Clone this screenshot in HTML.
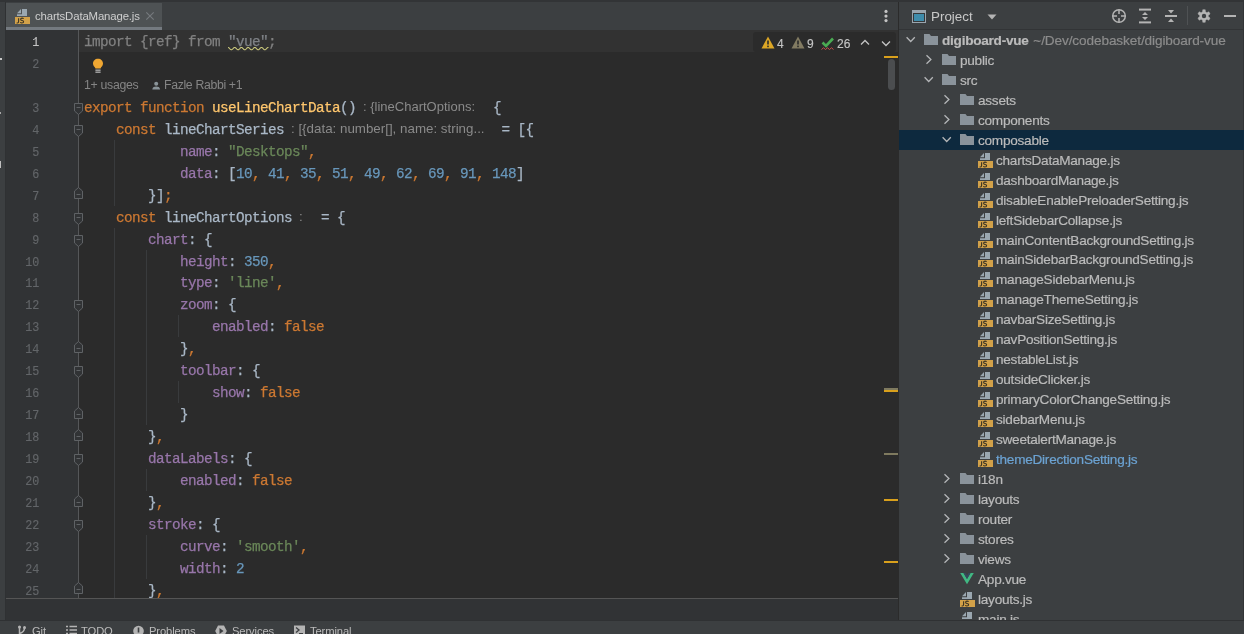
<!DOCTYPE html>
<html><head><meta charset="utf-8"><style>
html,body{margin:0;padding:0;}
body{-webkit-font-smoothing:antialiased;width:1244px;height:634px;overflow:hidden;position:relative;background:#2b2b2b;font-family:"Liberation Sans",sans-serif;}
.abs{position:absolute;}
.ic{position:absolute;line-height:0;}
#topstrip{position:absolute;left:0;top:0;width:1244px;height:2px;background:#323436;}
#leftbar{position:absolute;left:0;top:2px;width:5px;height:618px;background:#3c3f41;}
#leftborder{position:absolute;left:5px;top:2px;width:1px;height:618px;background:#2f3133;}
#tabbar{position:absolute;left:6px;top:2px;width:892px;height:28px;background:#3c3f41;}
#tab{position:absolute;left:6px;top:3px;width:156px;height:24px;background:#4e5254;}
#tabul{position:absolute;left:6px;top:27px;width:156px;height:3px;background:#747a80;}
#tab .name{position:absolute;left:29px;top:7px;font-size:11.4px;letter-spacing:-0.15px;color:#cfcfcf;white-space:nowrap;}
#editor{position:absolute;left:6px;top:30px;width:892px;height:568px;background:#2b2b2b;}
#curline{position:absolute;left:79px;top:30px;width:819px;height:22px;background:#323232;}
#edline{position:absolute;left:6px;top:598px;width:892px;height:1px;background:#555555;}
#hscroll{position:absolute;left:6px;top:599px;width:892px;height:21px;background:#313335;}
#divider{position:absolute;left:898px;top:2px;width:1px;height:618px;background:#2b2b2b;}
#panel{position:absolute;left:899px;top:2px;width:345px;height:618px;background:#3c3f41;}
#pheadb{position:absolute;left:899px;top:29px;width:345px;height:1px;background:#323436;}
#bottombar{position:absolute;left:0;top:621px;width:1244px;height:13px;background:#3c3f41;}
#bottomb{position:absolute;left:0;top:620px;width:1244px;height:1px;background:#2f3133;}
.num{position:absolute;left:6px;width:33px;text-align:right;font-family:"Liberation Mono",monospace;font-size:13px;letter-spacing:-0.2px;line-height:25.5px;color:#636669;transform:scaleX(0.9);transform-origin:right center;-webkit-text-stroke:0.15px currentColor;}
.num.cur{color:#c4c4c4;}
.ln{position:absolute;left:84px;white-space:pre;font-family:"Liberation Mono",monospace;font-size:14.3px;letter-spacing:-0.58px;line-height:24px;color:#a9b7c6;-webkit-text-stroke:0.25px currentColor;}
.guide{position:absolute;width:1px;background:#393b3d;}
.k{color:#cc7832}.fn{color:#ffc66d}.p{color:#9876aa}.s{color:#6a8759}.n{color:#6897bb}.d{color:#a9b7c6}.g{color:#808080}
.gs{color:#7e8186;}
.hint{position:absolute;white-space:nowrap;font-family:"Liberation Sans",sans-serif;font-size:13.4px;line-height:22px;color:#8a8a8a;}
.inlay{position:absolute;white-space:nowrap;font-family:"Liberation Sans",sans-serif;font-size:12.3px;line-height:22px;letter-spacing:-0.3px;color:#858585;}
.tt{position:absolute;white-space:nowrap;font-size:13.6px;letter-spacing:-0.25px;line-height:22px;color:#bbbbbb;-webkit-text-stroke:0.2px currentColor;}
.tt.b{font-weight:bold;}
.tt .path{font-weight:normal;color:#8c8c8c;}
.tt.blue{color:#6ca3d3;}
.selrow{position:absolute;left:899px;width:345px;height:20px;background:#0d293e;}
.bb{position:absolute;top:623px;font-size:11.2px;letter-spacing:-0.1px;line-height:16px;color:#bbbbbb;white-space:nowrap;}
.wn{position:absolute;top:35.5px;font-size:12px;line-height:16px;color:#c4c4c4;-webkit-text-stroke:0.15px currentColor;}
#root{position:absolute;left:0;top:0;width:1244px;height:634px;overflow:hidden;will-change:transform;}
svg{overflow:visible;}

</style></head><body><div id="root">
<div id="topstrip"></div>
<div id="leftbar"></div>
<div id="leftborder"></div>
<div class="abs" style="left:0;top:58px;width:2px;height:2px;background:#c8c8c8"></div>
<div class="abs" style="left:0;top:112px;width:1px;height:2px;background:#a8a8a8"></div>
<div class="abs" style="left:0;top:161px;width:1px;height:7px;background:#c0c0c0"></div>
<div id="tabbar"></div>
<div id="tab">
  <div class="ic" style="left:9px;top:5px"><svg width="16" height="17" viewBox="0 0 16 17"><path d="M2 5.2 L6 1 V5.2 Z" fill="#9aa7b0"/><path d="M7 1 H12 V8 H2 V6.2 H7 Z" fill="#9aa7b0"/><rect x="0" y="9" width="15" height="7" fill="#d2a149"/><path d="M3.6 10.2 V13.6 Q3.6 15 2.4 15 H1.6" fill="none" stroke="#3b3424" stroke-width="1.1"/><path d="M8.6 10.8 Q8.2 10.1 7 10.1 Q5.6 10.1 5.6 11.3 Q5.6 12.3 7 12.5 Q8.6 12.7 8.6 13.8 Q8.6 15 7 15 Q5.7 15 5.3 14.2" fill="none" stroke="#3b3424" stroke-width="1.1"/></svg></div>
  <div class="name">chartsDataManage.js</div>
  <svg style="position:absolute;left:140px;top:9px" width="8" height="8" viewBox="0 0 8 8"><path d="M0.3 0.3 L7.7 7.7 M7.7 0.3 L0.3 7.7" stroke="#767a7e" stroke-width="1.1"/></svg>
</div>
<div id="tabul"></div>
<svg style="position:absolute;left:883px;top:9px" width="6" height="14" viewBox="0 0 6 14"><circle cx="3" cy="2.4" r="1.6" fill="#c4c4c4"/><circle cx="3" cy="7.1" r="1.6" fill="#c4c4c4"/><circle cx="3" cy="11.6" r="1.6" fill="#c4c4c4"/></svg>
<div id="editor"></div>
<div class="abs" style="left:6px;top:30px;width:72px;height:568px;background:#313335"></div>
<div id="curline"></div>
<div class="abs" style="left:78px;top:30px;width:1px;height:568px;background:#555759"></div>
<div class="guide" style="left:114px;top:139.75px;height:65.85px"></div>
<div class="guide" style="left:114px;top:227.54999999999998px;height:370.45000000000005px"></div>
<div class="guide" style="left:146px;top:249.5px;height:175.59999999999997px"></div>
<div class="guide" style="left:178px;top:315.34999999999997px;height:21.94999999999999px"></div>
<div class="guide" style="left:178px;top:381.2px;height:21.94999999999999px"></div>
<div class="guide" style="left:146px;top:469.0px;height:21.94999999999999px"></div>
<div class="guide" style="left:146px;top:534.8499999999999px;height:43.90000000000009px"></div>
<div class="abs" style="left:74px;top:102.85px;height:13px;line-height:0"><svg width="10" height="13" viewBox="0 0 10 13"><path d="M0.5 0.5 H8.5 V8 L4.5 11.5 L0.5 8 Z" fill="#313335" stroke="#5f6265" stroke-width="1"/><path d="M2.5 4.5 H6.5" stroke="#5f6265" stroke-width="1"/></svg></div>
<div class="abs" style="left:74px;top:124.8px;height:13px;line-height:0"><svg width="10" height="13" viewBox="0 0 10 13"><path d="M0.5 0.5 H8.5 V8 L4.5 11.5 L0.5 8 Z" fill="#313335" stroke="#5f6265" stroke-width="1"/><path d="M2.5 4.5 H6.5" stroke="#5f6265" stroke-width="1"/></svg></div>
<div class="abs" style="left:74px;top:212.6px;height:13px;line-height:0"><svg width="10" height="13" viewBox="0 0 10 13"><path d="M0.5 0.5 H8.5 V8 L4.5 11.5 L0.5 8 Z" fill="#313335" stroke="#5f6265" stroke-width="1"/><path d="M2.5 4.5 H6.5" stroke="#5f6265" stroke-width="1"/></svg></div>
<div class="abs" style="left:74px;top:234.54999999999998px;height:13px;line-height:0"><svg width="10" height="13" viewBox="0 0 10 13"><path d="M0.5 0.5 H8.5 V8 L4.5 11.5 L0.5 8 Z" fill="#313335" stroke="#5f6265" stroke-width="1"/><path d="M2.5 4.5 H6.5" stroke="#5f6265" stroke-width="1"/></svg></div>
<div class="abs" style="left:74px;top:300.4px;height:13px;line-height:0"><svg width="10" height="13" viewBox="0 0 10 13"><path d="M0.5 0.5 H8.5 V8 L4.5 11.5 L0.5 8 Z" fill="#313335" stroke="#5f6265" stroke-width="1"/><path d="M2.5 4.5 H6.5" stroke="#5f6265" stroke-width="1"/></svg></div>
<div class="abs" style="left:74px;top:366.25px;height:13px;line-height:0"><svg width="10" height="13" viewBox="0 0 10 13"><path d="M0.5 0.5 H8.5 V8 L4.5 11.5 L0.5 8 Z" fill="#313335" stroke="#5f6265" stroke-width="1"/><path d="M2.5 4.5 H6.5" stroke="#5f6265" stroke-width="1"/></svg></div>
<div class="abs" style="left:74px;top:454.05px;height:13px;line-height:0"><svg width="10" height="13" viewBox="0 0 10 13"><path d="M0.5 0.5 H8.5 V8 L4.5 11.5 L0.5 8 Z" fill="#313335" stroke="#5f6265" stroke-width="1"/><path d="M2.5 4.5 H6.5" stroke="#5f6265" stroke-width="1"/></svg></div>
<div class="abs" style="left:74px;top:519.9px;height:13px;line-height:0"><svg width="10" height="13" viewBox="0 0 10 13"><path d="M0.5 0.5 H8.5 V8 L4.5 11.5 L0.5 8 Z" fill="#313335" stroke="#5f6265" stroke-width="1"/><path d="M2.5 4.5 H6.5" stroke="#5f6265" stroke-width="1"/></svg></div>
<div class="abs" style="left:74px;top:187.25px;height:13px;line-height:0"><svg width="10" height="13" viewBox="0 0 10 13"><path d="M0.5 11.5 H8.5 V4 L4.5 0.5 L0.5 4 Z" fill="#313335" stroke="#5f6265" stroke-width="1"/><path d="M2.5 7.5 H6.5" stroke="#5f6265" stroke-width="1"/></svg></div>
<div class="abs" style="left:74px;top:340.90000000000003px;height:13px;line-height:0"><svg width="10" height="13" viewBox="0 0 10 13"><path d="M0.5 11.5 H8.5 V4 L4.5 0.5 L0.5 4 Z" fill="#313335" stroke="#5f6265" stroke-width="1"/><path d="M2.5 7.5 H6.5" stroke="#5f6265" stroke-width="1"/></svg></div>
<div class="abs" style="left:74px;top:406.75px;height:13px;line-height:0"><svg width="10" height="13" viewBox="0 0 10 13"><path d="M0.5 11.5 H8.5 V4 L4.5 0.5 L0.5 4 Z" fill="#313335" stroke="#5f6265" stroke-width="1"/><path d="M2.5 7.5 H6.5" stroke="#5f6265" stroke-width="1"/></svg></div>
<div class="abs" style="left:74px;top:428.7px;height:13px;line-height:0"><svg width="10" height="13" viewBox="0 0 10 13"><path d="M0.5 11.5 H8.5 V4 L4.5 0.5 L0.5 4 Z" fill="#313335" stroke="#5f6265" stroke-width="1"/><path d="M2.5 7.5 H6.5" stroke="#5f6265" stroke-width="1"/></svg></div>
<div class="abs" style="left:74px;top:494.55px;height:13px;line-height:0"><svg width="10" height="13" viewBox="0 0 10 13"><path d="M0.5 11.5 H8.5 V4 L4.5 0.5 L0.5 4 Z" fill="#313335" stroke="#5f6265" stroke-width="1"/><path d="M2.5 7.5 H6.5" stroke="#5f6265" stroke-width="1"/></svg></div>
<div class="abs" style="left:74px;top:582.35px;height:13px;line-height:0"><svg width="10" height="13" viewBox="0 0 10 13"><path d="M0.5 11.5 H8.5 V4 L4.5 0.5 L0.5 4 Z" fill="#313335" stroke="#5f6265" stroke-width="1"/><path d="M2.5 7.5 H6.5" stroke="#5f6265" stroke-width="1"/></svg></div>
<div class="ln" style="top:30.0px"><span class="g">import {ref} from </span><span class="gs">&quot;vue&quot;</span><span class="g">;</span></div>
<div class="num cur" style="top:30.0px">1</div>
<div class="ln" style="top:51.95px"></div>
<div class="num" style="top:51.95px">2</div>
<div class="ln" style="top:95.85px"><span class="k">export</span><span class="d"> </span><span class="k">function</span><span class="d"> </span><span class="fn">useLineChartData</span><span class="d">()</span></div>
<div class="num" style="top:95.85px">3</div>
<div class="ln" style="top:117.8px"><span class="d">    </span><span class="k">const</span><span class="d"> lineChartSeries</span></div>
<div class="num" style="top:117.8px">4</div>
<div class="ln" style="top:139.75px"><span class="d">            </span><span class="p">name</span><span class="d">: </span><span class="s">&quot;Desktops&quot;</span><span class="k">,</span></div>
<div class="num" style="top:139.75px">5</div>
<div class="ln" style="top:161.7px"><span class="d">            </span><span class="p">data</span><span class="d">: [</span><span class="n">10</span><span class="k">, </span><span class="n">41</span><span class="k">, </span><span class="n">35</span><span class="k">, </span><span class="n">51</span><span class="k">, </span><span class="n">49</span><span class="k">, </span><span class="n">62</span><span class="k">, </span><span class="n">69</span><span class="k">, </span><span class="n">91</span><span class="k">, </span><span class="n">148</span><span class="d">]</span></div>
<div class="num" style="top:161.7px">6</div>
<div class="ln" style="top:183.65px"><span class="d">        }]</span><span class="k">;</span></div>
<div class="num" style="top:183.65px">7</div>
<div class="ln" style="top:205.6px"><span class="d">    </span><span class="k">const</span><span class="d"> lineChartOptions</span></div>
<div class="num" style="top:205.6px">8</div>
<div class="ln" style="top:227.54999999999998px"><span class="d">        </span><span class="p">chart</span><span class="d">: {</span></div>
<div class="num" style="top:227.54999999999998px">9</div>
<div class="ln" style="top:249.5px"><span class="d">            </span><span class="p">height</span><span class="d">: </span><span class="n">350</span><span class="k">,</span></div>
<div class="num" style="top:249.5px">10</div>
<div class="ln" style="top:271.45px"><span class="d">            </span><span class="p">type</span><span class="d">: </span><span class="s">&#x27;line&#x27;</span><span class="k">,</span></div>
<div class="num" style="top:271.45px">11</div>
<div class="ln" style="top:293.4px"><span class="d">            </span><span class="p">zoom</span><span class="d">: {</span></div>
<div class="num" style="top:293.4px">12</div>
<div class="ln" style="top:315.34999999999997px"><span class="d">                </span><span class="p">enabled</span><span class="d">: </span><span class="k">false</span></div>
<div class="num" style="top:315.34999999999997px">13</div>
<div class="ln" style="top:337.3px"><span class="d">            }</span><span class="k">,</span></div>
<div class="num" style="top:337.3px">14</div>
<div class="ln" style="top:359.25px"><span class="d">            </span><span class="p">toolbar</span><span class="d">: {</span></div>
<div class="num" style="top:359.25px">15</div>
<div class="ln" style="top:381.2px"><span class="d">                </span><span class="p">show</span><span class="d">: </span><span class="k">false</span></div>
<div class="num" style="top:381.2px">16</div>
<div class="ln" style="top:403.15px"><span class="d">            }</span></div>
<div class="num" style="top:403.15px">17</div>
<div class="ln" style="top:425.09999999999997px"><span class="d">        }</span><span class="k">,</span></div>
<div class="num" style="top:425.09999999999997px">18</div>
<div class="ln" style="top:447.05px"><span class="d">        </span><span class="p">dataLabels</span><span class="d">: {</span></div>
<div class="num" style="top:447.05px">19</div>
<div class="ln" style="top:469.0px"><span class="d">            </span><span class="p">enabled</span><span class="d">: </span><span class="k">false</span></div>
<div class="num" style="top:469.0px">20</div>
<div class="ln" style="top:490.95px"><span class="d">        }</span><span class="k">,</span></div>
<div class="num" style="top:490.95px">21</div>
<div class="ln" style="top:512.9px"><span class="d">        </span><span class="p">stroke</span><span class="d">: {</span></div>
<div class="num" style="top:512.9px">22</div>
<div class="ln" style="top:534.8499999999999px"><span class="d">            </span><span class="p">curve</span><span class="d">: </span><span class="s">&#x27;smooth&#x27;</span><span class="k">,</span></div>
<div class="num" style="top:534.8499999999999px">23</div>
<div class="ln" style="top:556.8px"><span class="d">            </span><span class="p">width</span><span class="d">: </span><span class="n">2</span></div>
<div class="num" style="top:556.8px">24</div>
<div class="ln" style="top:578.75px"><span class="d">        }</span><span class="k">,</span></div>
<div class="num" style="top:578.75px">25</div>
<div class="hint" style="left:363px;top:95.85px;font-size:13px">: {lineChartOptions:</div>
<div class="ln" style="left:493px;top:95.85px"><span class="d">{</span></div>
<div class="hint" style="left:291px;top:117.8px;font-size:13.35px">: [{data: number[], name: string...</div>
<div class="ln" style="left:501.5px;top:117.8px"><span class="d">= [{</span></div>
<div class="hint" style="left:299px;top:205.6px">:</div>
<div class="ln" style="left:321px;top:205.6px"><span class="d">= {</span></div>
<div class="inlay" style="left:84px;top:74px">1+ usages</div>
<svg class="abs" style="left:152px;top:81px" width="9" height="9" viewBox="0 0 9 9"><circle cx="4.2" cy="2.8" r="2" fill="#8a9499"/><path d="M0.3 8.4 C0.6 6.2 2.2 5.6 4.2 5.6 C6.2 5.6 7.8 6.2 8.1 8.4 Z" fill="#8a9499"/></svg>
<div class="inlay" style="left:164px;top:74px;letter-spacing:-0.35px">Fazle Rabbi +1</div>
<svg class="abs" style="left:92px;top:58px" width="12" height="16" viewBox="0 0 12 16"><path d="M6 0.8 C8.9 0.8 11 2.9 11 5.6 C11 7.6 9.7 8.6 9 9.6 L8.6 10.6 H3.4 L3 9.6 C2.3 8.6 1 7.6 1 5.6 C1 2.9 3.1 0.8 6 0.8 Z" fill="#f0a732"/><rect x="3.4" y="11.6" width="5.2" height="1.1" fill="#c9c9c9"/><rect x="3.4" y="13.6" width="5.2" height="1.1" fill="#c9c9c9"/></svg>
<svg class="abs" style="left:228px;top:46.6px" width="41" height="4" viewBox="0 0 41 4"><path d="M0.00 0.45 L0.20 0.47 L0.41 0.53 L0.61 0.63 L0.81 0.77 L1.01 0.93 L1.22 1.12 L1.42 1.32 L1.62 1.54 L1.82 1.76 L2.02 1.97 L2.23 2.17 L2.43 2.35 L2.63 2.50 L2.83 2.62 L3.04 2.70 L3.24 2.74 L3.44 2.75 L3.65 2.71 L3.85 2.63 L4.05 2.51 L4.25 2.36 L4.46 2.19 L4.66 1.99 L4.86 1.78 L5.06 1.56 L5.26 1.34 L5.47 1.14 L5.67 0.95 L5.87 0.78 L6.08 0.64 L6.28 0.54 L6.48 0.47 L6.68 0.45 L6.88 0.47 L7.09 0.53 L7.29 0.62 L7.49 0.75 L7.70 0.92 L7.90 1.10 L8.10 1.31 L8.30 1.52 L8.51 1.74 L8.71 1.95 L8.91 2.15 L9.11 2.33 L9.31 2.49 L9.52 2.61 L9.72 2.70 L9.92 2.74 L10.12 2.75 L10.33 2.71 L10.53 2.64 L10.73 2.52 L10.94 2.38 L11.14 2.20 L11.34 2.01 L11.54 1.80 L11.74 1.58 L11.95 1.36 L12.15 1.15 L12.35 0.96 L12.55 0.79 L12.76 0.65 L12.96 0.55 L13.16 0.48 L13.37 0.45 L13.57 0.46 L13.77 0.52 L13.97 0.61 L14.18 0.74 L14.38 0.90 L14.58 1.09 L14.78 1.29 L14.98 1.50 L15.19 1.72 L15.39 1.93 L15.59 2.14 L15.79 2.32 L16.00 2.48 L16.20 2.60 L16.40 2.69 L16.61 2.74 L16.81 2.75 L17.01 2.72 L17.21 2.64 L17.41 2.53 L17.62 2.39 L17.82 2.22 L18.02 2.02 L18.23 1.81 L18.43 1.60 L18.63 1.38 L18.83 1.17 L19.04 0.98 L19.24 0.81 L19.44 0.66 L19.64 0.55 L19.84 0.48 L20.05 0.45 L20.25 0.46 L20.45 0.51 L20.66 0.60 L20.86 0.73 L21.06 0.89 L21.26 1.07 L21.46 1.27 L21.67 1.48 L21.87 1.70 L22.07 1.92 L22.27 2.12 L22.48 2.30 L22.68 2.46 L22.88 2.59 L23.09 2.68 L23.29 2.74 L23.49 2.75 L23.69 2.72 L23.89 2.65 L24.10 2.54 L24.30 2.40 L24.50 2.23 L24.70 2.04 L24.91 1.83 L25.11 1.62 L25.31 1.40 L25.52 1.19 L25.72 0.99 L25.92 0.82 L26.12 0.67 L26.32 0.56 L26.53 0.49 L26.73 0.45 L26.93 0.46 L27.14 0.51 L27.34 0.59 L27.54 0.72 L27.74 0.87 L27.95 1.05 L28.15 1.25 L28.35 1.47 L28.55 1.68 L28.75 1.90 L28.96 2.10 L29.16 2.29 L29.36 2.45 L29.57 2.58 L29.77 2.68 L29.97 2.73 L30.17 2.75 L30.38 2.72 L30.58 2.66 L30.78 2.56 L30.98 2.42 L31.18 2.25 L31.39 2.06 L31.59 1.85 L31.79 1.64 L32.00 1.42 L32.20 1.21 L32.40 1.01 L32.60 0.83 L32.80 0.69 L33.01 0.57 L33.21 0.49 L33.41 0.45 L33.62 0.46 L33.82 0.50 L34.02 0.58 L34.22 0.70 L34.42 0.86 L34.63 1.04 L34.83 1.23 L35.03 1.45 L35.23 1.66 L35.44 1.88 L35.64 2.09 L35.84 2.27 L36.05 2.44 L36.25 2.57 L36.45 2.67 L36.65 2.73 L36.85 2.75 L37.06 2.73 L37.26 2.67 L37.46 2.57 L37.66 2.43 L37.87 2.27 L38.07 2.08 L38.27 1.87 L38.48 1.65 L38.68 1.44 L38.88 1.22 L39.08 1.03 L39.28 0.85 L39.49 0.70 L39.69 0.58 L39.89 0.50 L40.09 0.46 L40.30 0.45 L40.50 0.50" fill="none" stroke="#c9c77b" stroke-width="1.1"/></svg>
<div id="edline"></div>
<div id="hscroll"></div>
<div id="divider"></div>
<div id="panel"></div>
<div id="pheadb"></div>

<!-- project header -->
<svg class="abs" style="left:912px;top:10px" width="14" height="13" viewBox="0 0 14 13"><rect x="0" y="0" width="14" height="13" fill="#9aa5ae"/><rect x="1" y="3" width="12" height="9" fill="#35383a"/><rect x="2" y="4" width="10" height="7" fill="#3f8cab"/></svg>
<div class="abs" style="left:931px;top:9px;font-size:13.4px;line-height:16px;color:#c8c8c8;white-space:nowrap">Project</div>
<svg class="abs" style="left:987px;top:14px" width="10" height="6" viewBox="0 0 10 6"><path d="M0.5 0.5 H9.5 L5 5.5 Z" fill="#b4b4b4"/></svg>
<svg class="abs" style="left:1111px;top:8px" width="16" height="16" viewBox="0 0 16 16"><circle cx="8" cy="8" r="6.3" fill="none" stroke="#b4b4b4" stroke-width="1.5"/><path d="M8 1.5 V6 M8 10 V14.5 M1.5 8 H6 M10 8 H14.5" stroke="#b4b4b4" stroke-width="1.5"/></svg>
<svg class="abs" style="left:1138px;top:8px" width="14" height="16" viewBox="0 0 14 16"><rect x="1" y="0.6" width="12" height="2" fill="#b4b4b4"/><rect x="1" y="13.4" width="12" height="2" fill="#b4b4b4"/><path d="M4 7 L7 4 L10 7 Z M4 9 L7 12 L10 9 Z" fill="#b4b4b4"/></svg>
<svg class="abs" style="left:1164px;top:9px" width="14" height="14" viewBox="0 0 14 14"><rect x="1" y="6" width="12" height="2" fill="#b4b4b4"/><path d="M4 1 H10 L7 4.5 Z M4 13 H10 L7 9.5 Z" fill="#b4b4b4"/></svg>
<div class="abs" style="left:1187px;top:6px;width:1px;height:19px;background:#4f5254"></div>
<svg class="abs" style="left:1197px;top:9.1px" width="14" height="14" viewBox="0 0 14 14"><path d="M5.57 2.84 L5.78 0.72 L8.22 0.72 L8.43 2.84 L9.89 3.68 L11.83 2.80 L13.05 4.92 L11.32 6.16 L11.32 7.84 L13.05 9.08 L11.83 11.20 L9.89 10.32 L8.43 11.16 L8.22 13.28 L5.78 13.28 L5.57 11.16 L4.11 10.32 L2.17 11.20 L0.95 9.08 L2.68 7.84 L2.68 6.16 L0.95 4.92 L2.17 2.80 L4.11 3.68 Z" fill="#b4b4b4" stroke="#b4b4b4" stroke-width="0.5" stroke-linejoin="round"/><circle cx="7" cy="7" r="2.2" fill="#3c3f41"/></svg>
<div class="abs" style="left:1224px;top:15px;width:12px;height:2px;background:#b4b4b4"></div>
<div class="abs" style="left:1243px;top:2px;width:1px;height:618px;background:#323436"></div>

<!-- inspection widget -->
<div class="abs" style="left:753px;top:32px;width:143px;height:20px;background:#2b2b2b;border-radius:3px"></div>
<svg class="abs" style="left:761px;top:36px" width="14" height="13" viewBox="0 0 14 13"><path d="M7 0.5 L13.5 12.5 H0.5 Z" fill="#dca625"/><rect x="6.2" y="4.5" width="1.6" height="4" fill="#2b2b2b"/><rect x="6.2" y="9.6" width="1.6" height="1.6" fill="#2b2b2b"/></svg>
<div class="wn" style="left:777px">4</div>
<svg class="abs" style="left:791px;top:36px" width="14" height="13" viewBox="0 0 14 13"><path d="M7 0.5 L13.5 12.5 H0.5 Z" fill="#827b62"/><rect x="6.2" y="4.5" width="1.6" height="4" fill="#2b2b2b"/><rect x="6.2" y="9.6" width="1.6" height="1.6" fill="#2b2b2b"/></svg>
<div class="wn" style="left:807px">9</div>
<svg class="abs" style="left:821px;top:37px" width="14" height="14" viewBox="0 0 14 14"><path d="M1.5 5.5 L5 9 L12 1.5" fill="none" stroke="#4aab53" stroke-width="2.6"/><path d="M0.5 12.5 L2.5 10.8 L4.5 12.5 L6.5 10.8 L8.5 12.5 L10.5 10.8 L12.5 12.5" fill="none" stroke="#c9514c" stroke-width="1"/></svg>
<div class="wn" style="left:837px">26</div>
<svg class="abs" style="left:860px;top:39px" width="10" height="7" viewBox="0 0 10 7"><path d="M1 5.5 L5 1.5 L9 5.5" fill="none" stroke="#c4c4c4" stroke-width="1.3"/></svg>
<svg class="abs" style="left:881px;top:40px" width="10" height="7" viewBox="0 0 10 7"><path d="M1 1.5 L5 5.5 L9 1.5" fill="none" stroke="#c4c4c4" stroke-width="1.3"/></svg>

<!-- scrollbar -->
<div class="abs" style="left:884px;top:56px;width:14px;height:2px;background:#d9a01c"></div>
<div class="abs" style="left:888px;top:59px;width:7px;height:31px;background:#4b4d4f;border-radius:3.5px"></div>
<div class="abs" style="left:884px;top:388px;width:14px;height:2px;background:#7f7a5f"></div>
<div class="abs" style="left:884px;top:390px;width:14px;height:2px;background:#d9a01c"></div>
<div class="abs" style="left:884px;top:453px;width:14px;height:2px;background:#7f7a5f"></div>
<div class="abs" style="left:884px;top:499px;width:14px;height:2px;background:#d9a01c"></div>
<div class="abs" style="left:884px;top:561px;width:14px;height:2px;background:#d9a01c"></div>
<div class="ic" style="left:906px;top:37.0px"><svg width="11" height="7" viewBox="0 0 11 7"><path d="M0.6 0.3 L4.7 4.5 L8.8 0.3" fill="none" stroke="#b4b6b8" stroke-width="1.3"/></svg></div>
<div class="ic" style="left:924px;top:34.0px"><svg width="14" height="11" viewBox="0 0 14 11"><path d="M0 0 H5.5 L7 2 H14 V11 H0 Z" fill="#8a939b"/></svg></div>
<div class="tt b" style="left:942px;top:30.0px">digiboard-vue<span class="path" style="font-size:13.6px;letter-spacing:-0.1px;margin-left:1px">&nbsp;~/Dev/codebasket/digiboard-vue</span></div>
<div class="ic" style="left:926px;top:54.95px"><svg width="7" height="11" viewBox="0 0 7 11"><path d="M0.5 0.3 L4.9 4.5 L0.5 8.7" fill="none" stroke="#b4b6b8" stroke-width="1.3"/></svg></div>
<div class="ic" style="left:942px;top:53.95px"><svg width="14" height="11" viewBox="0 0 14 11"><path d="M0 0 H5.5 L7 2 H14 V11 H0 Z" fill="#8a939b"/></svg></div>
<div class="tt" style="left:960px;top:49.95px">public</div>
<div class="ic" style="left:924px;top:76.9px"><svg width="11" height="7" viewBox="0 0 11 7"><path d="M0.6 0.3 L4.7 4.5 L8.8 0.3" fill="none" stroke="#b4b6b8" stroke-width="1.3"/></svg></div>
<div class="ic" style="left:942px;top:73.9px"><svg width="14" height="11" viewBox="0 0 14 11"><path d="M0 0 H5.5 L7 2 H14 V11 H0 Z" fill="#8a939b"/></svg></div>
<div class="tt" style="left:960px;top:69.9px">src</div>
<div class="ic" style="left:944px;top:94.85px"><svg width="7" height="11" viewBox="0 0 7 11"><path d="M0.5 0.3 L4.9 4.5 L0.5 8.7" fill="none" stroke="#b4b6b8" stroke-width="1.3"/></svg></div>
<div class="ic" style="left:960px;top:93.85px"><svg width="14" height="11" viewBox="0 0 14 11"><path d="M0 0 H5.5 L7 2 H14 V11 H0 Z" fill="#8a939b"/></svg></div>
<div class="tt" style="left:978px;top:89.85px">assets</div>
<div class="ic" style="left:944px;top:114.8px"><svg width="7" height="11" viewBox="0 0 7 11"><path d="M0.5 0.3 L4.9 4.5 L0.5 8.7" fill="none" stroke="#b4b6b8" stroke-width="1.3"/></svg></div>
<div class="ic" style="left:960px;top:113.8px"><svg width="14" height="11" viewBox="0 0 14 11"><path d="M0 0 H5.5 L7 2 H14 V11 H0 Z" fill="#8a939b"/></svg></div>
<div class="tt" style="left:978px;top:109.8px">components</div>
<div class="selrow" style="top:129.75px"></div>
<div class="ic" style="left:942px;top:136.75px"><svg width="11" height="7" viewBox="0 0 11 7"><path d="M0.6 0.3 L4.7 4.5 L8.8 0.3" fill="none" stroke="#b4b6b8" stroke-width="1.3"/></svg></div>
<div class="ic" style="left:960px;top:133.75px"><svg width="14" height="11" viewBox="0 0 14 11"><path d="M0 0 H5.5 L7 2 H14 V11 H0 Z" fill="#8a939b"/></svg></div>
<div class="tt" style="left:978px;top:129.75px">composable</div>
<div class="ic" style="left:978px;top:151.7px"><svg width="16" height="17" viewBox="0 0 16 17"><path d="M2 5.2 L6 1 V5.2 Z" fill="#9aa7b0"/><path d="M7 1 H12 V8 H2 V6.2 H7 Z" fill="#9aa7b0"/><rect x="0" y="9" width="15" height="7" fill="#d2a149"/><path d="M3.6 10.2 V13.6 Q3.6 15 2.4 15 H1.6" fill="none" stroke="#3b3424" stroke-width="1.1"/><path d="M8.6 10.8 Q8.2 10.1 7 10.1 Q5.6 10.1 5.6 11.3 Q5.6 12.3 7 12.5 Q8.6 12.7 8.6 13.8 Q8.6 15 7 15 Q5.7 15 5.3 14.2" fill="none" stroke="#3b3424" stroke-width="1.1"/></svg></div>
<div class="tt" style="left:996px;top:149.7px">chartsDataManage.js</div>
<div class="ic" style="left:978px;top:171.65px"><svg width="16" height="17" viewBox="0 0 16 17"><path d="M2 5.2 L6 1 V5.2 Z" fill="#9aa7b0"/><path d="M7 1 H12 V8 H2 V6.2 H7 Z" fill="#9aa7b0"/><rect x="0" y="9" width="15" height="7" fill="#d2a149"/><path d="M3.6 10.2 V13.6 Q3.6 15 2.4 15 H1.6" fill="none" stroke="#3b3424" stroke-width="1.1"/><path d="M8.6 10.8 Q8.2 10.1 7 10.1 Q5.6 10.1 5.6 11.3 Q5.6 12.3 7 12.5 Q8.6 12.7 8.6 13.8 Q8.6 15 7 15 Q5.7 15 5.3 14.2" fill="none" stroke="#3b3424" stroke-width="1.1"/></svg></div>
<div class="tt" style="left:996px;top:169.65px">dashboardManage.js</div>
<div class="ic" style="left:978px;top:191.6px"><svg width="16" height="17" viewBox="0 0 16 17"><path d="M2 5.2 L6 1 V5.2 Z" fill="#9aa7b0"/><path d="M7 1 H12 V8 H2 V6.2 H7 Z" fill="#9aa7b0"/><rect x="0" y="9" width="15" height="7" fill="#d2a149"/><path d="M3.6 10.2 V13.6 Q3.6 15 2.4 15 H1.6" fill="none" stroke="#3b3424" stroke-width="1.1"/><path d="M8.6 10.8 Q8.2 10.1 7 10.1 Q5.6 10.1 5.6 11.3 Q5.6 12.3 7 12.5 Q8.6 12.7 8.6 13.8 Q8.6 15 7 15 Q5.7 15 5.3 14.2" fill="none" stroke="#3b3424" stroke-width="1.1"/></svg></div>
<div class="tt" style="left:996px;top:189.6px">disableEnablePreloaderSetting.js</div>
<div class="ic" style="left:978px;top:211.55px"><svg width="16" height="17" viewBox="0 0 16 17"><path d="M2 5.2 L6 1 V5.2 Z" fill="#9aa7b0"/><path d="M7 1 H12 V8 H2 V6.2 H7 Z" fill="#9aa7b0"/><rect x="0" y="9" width="15" height="7" fill="#d2a149"/><path d="M3.6 10.2 V13.6 Q3.6 15 2.4 15 H1.6" fill="none" stroke="#3b3424" stroke-width="1.1"/><path d="M8.6 10.8 Q8.2 10.1 7 10.1 Q5.6 10.1 5.6 11.3 Q5.6 12.3 7 12.5 Q8.6 12.7 8.6 13.8 Q8.6 15 7 15 Q5.7 15 5.3 14.2" fill="none" stroke="#3b3424" stroke-width="1.1"/></svg></div>
<div class="tt" style="left:996px;top:209.55px">leftSidebarCollapse.js</div>
<div class="ic" style="left:978px;top:231.5px"><svg width="16" height="17" viewBox="0 0 16 17"><path d="M2 5.2 L6 1 V5.2 Z" fill="#9aa7b0"/><path d="M7 1 H12 V8 H2 V6.2 H7 Z" fill="#9aa7b0"/><rect x="0" y="9" width="15" height="7" fill="#d2a149"/><path d="M3.6 10.2 V13.6 Q3.6 15 2.4 15 H1.6" fill="none" stroke="#3b3424" stroke-width="1.1"/><path d="M8.6 10.8 Q8.2 10.1 7 10.1 Q5.6 10.1 5.6 11.3 Q5.6 12.3 7 12.5 Q8.6 12.7 8.6 13.8 Q8.6 15 7 15 Q5.7 15 5.3 14.2" fill="none" stroke="#3b3424" stroke-width="1.1"/></svg></div>
<div class="tt" style="left:996px;top:229.5px">mainContentBackgroundSetting.js</div>
<div class="ic" style="left:978px;top:251.45px"><svg width="16" height="17" viewBox="0 0 16 17"><path d="M2 5.2 L6 1 V5.2 Z" fill="#9aa7b0"/><path d="M7 1 H12 V8 H2 V6.2 H7 Z" fill="#9aa7b0"/><rect x="0" y="9" width="15" height="7" fill="#d2a149"/><path d="M3.6 10.2 V13.6 Q3.6 15 2.4 15 H1.6" fill="none" stroke="#3b3424" stroke-width="1.1"/><path d="M8.6 10.8 Q8.2 10.1 7 10.1 Q5.6 10.1 5.6 11.3 Q5.6 12.3 7 12.5 Q8.6 12.7 8.6 13.8 Q8.6 15 7 15 Q5.7 15 5.3 14.2" fill="none" stroke="#3b3424" stroke-width="1.1"/></svg></div>
<div class="tt" style="left:996px;top:249.45px">mainSidebarBackgroundSetting.js</div>
<div class="ic" style="left:978px;top:271.4px"><svg width="16" height="17" viewBox="0 0 16 17"><path d="M2 5.2 L6 1 V5.2 Z" fill="#9aa7b0"/><path d="M7 1 H12 V8 H2 V6.2 H7 Z" fill="#9aa7b0"/><rect x="0" y="9" width="15" height="7" fill="#d2a149"/><path d="M3.6 10.2 V13.6 Q3.6 15 2.4 15 H1.6" fill="none" stroke="#3b3424" stroke-width="1.1"/><path d="M8.6 10.8 Q8.2 10.1 7 10.1 Q5.6 10.1 5.6 11.3 Q5.6 12.3 7 12.5 Q8.6 12.7 8.6 13.8 Q8.6 15 7 15 Q5.7 15 5.3 14.2" fill="none" stroke="#3b3424" stroke-width="1.1"/></svg></div>
<div class="tt" style="left:996px;top:269.4px">manageSidebarMenu.js</div>
<div class="ic" style="left:978px;top:291.35px"><svg width="16" height="17" viewBox="0 0 16 17"><path d="M2 5.2 L6 1 V5.2 Z" fill="#9aa7b0"/><path d="M7 1 H12 V8 H2 V6.2 H7 Z" fill="#9aa7b0"/><rect x="0" y="9" width="15" height="7" fill="#d2a149"/><path d="M3.6 10.2 V13.6 Q3.6 15 2.4 15 H1.6" fill="none" stroke="#3b3424" stroke-width="1.1"/><path d="M8.6 10.8 Q8.2 10.1 7 10.1 Q5.6 10.1 5.6 11.3 Q5.6 12.3 7 12.5 Q8.6 12.7 8.6 13.8 Q8.6 15 7 15 Q5.7 15 5.3 14.2" fill="none" stroke="#3b3424" stroke-width="1.1"/></svg></div>
<div class="tt" style="left:996px;top:289.35px">manageThemeSetting.js</div>
<div class="ic" style="left:978px;top:311.3px"><svg width="16" height="17" viewBox="0 0 16 17"><path d="M2 5.2 L6 1 V5.2 Z" fill="#9aa7b0"/><path d="M7 1 H12 V8 H2 V6.2 H7 Z" fill="#9aa7b0"/><rect x="0" y="9" width="15" height="7" fill="#d2a149"/><path d="M3.6 10.2 V13.6 Q3.6 15 2.4 15 H1.6" fill="none" stroke="#3b3424" stroke-width="1.1"/><path d="M8.6 10.8 Q8.2 10.1 7 10.1 Q5.6 10.1 5.6 11.3 Q5.6 12.3 7 12.5 Q8.6 12.7 8.6 13.8 Q8.6 15 7 15 Q5.7 15 5.3 14.2" fill="none" stroke="#3b3424" stroke-width="1.1"/></svg></div>
<div class="tt" style="left:996px;top:309.3px">navbarSizeSetting.js</div>
<div class="ic" style="left:978px;top:331.25px"><svg width="16" height="17" viewBox="0 0 16 17"><path d="M2 5.2 L6 1 V5.2 Z" fill="#9aa7b0"/><path d="M7 1 H12 V8 H2 V6.2 H7 Z" fill="#9aa7b0"/><rect x="0" y="9" width="15" height="7" fill="#d2a149"/><path d="M3.6 10.2 V13.6 Q3.6 15 2.4 15 H1.6" fill="none" stroke="#3b3424" stroke-width="1.1"/><path d="M8.6 10.8 Q8.2 10.1 7 10.1 Q5.6 10.1 5.6 11.3 Q5.6 12.3 7 12.5 Q8.6 12.7 8.6 13.8 Q8.6 15 7 15 Q5.7 15 5.3 14.2" fill="none" stroke="#3b3424" stroke-width="1.1"/></svg></div>
<div class="tt" style="left:996px;top:329.25px">navPositionSetting.js</div>
<div class="ic" style="left:978px;top:351.2px"><svg width="16" height="17" viewBox="0 0 16 17"><path d="M2 5.2 L6 1 V5.2 Z" fill="#9aa7b0"/><path d="M7 1 H12 V8 H2 V6.2 H7 Z" fill="#9aa7b0"/><rect x="0" y="9" width="15" height="7" fill="#d2a149"/><path d="M3.6 10.2 V13.6 Q3.6 15 2.4 15 H1.6" fill="none" stroke="#3b3424" stroke-width="1.1"/><path d="M8.6 10.8 Q8.2 10.1 7 10.1 Q5.6 10.1 5.6 11.3 Q5.6 12.3 7 12.5 Q8.6 12.7 8.6 13.8 Q8.6 15 7 15 Q5.7 15 5.3 14.2" fill="none" stroke="#3b3424" stroke-width="1.1"/></svg></div>
<div class="tt" style="left:996px;top:349.2px">nestableList.js</div>
<div class="ic" style="left:978px;top:371.15px"><svg width="16" height="17" viewBox="0 0 16 17"><path d="M2 5.2 L6 1 V5.2 Z" fill="#9aa7b0"/><path d="M7 1 H12 V8 H2 V6.2 H7 Z" fill="#9aa7b0"/><rect x="0" y="9" width="15" height="7" fill="#d2a149"/><path d="M3.6 10.2 V13.6 Q3.6 15 2.4 15 H1.6" fill="none" stroke="#3b3424" stroke-width="1.1"/><path d="M8.6 10.8 Q8.2 10.1 7 10.1 Q5.6 10.1 5.6 11.3 Q5.6 12.3 7 12.5 Q8.6 12.7 8.6 13.8 Q8.6 15 7 15 Q5.7 15 5.3 14.2" fill="none" stroke="#3b3424" stroke-width="1.1"/></svg></div>
<div class="tt" style="left:996px;top:369.15px">outsideClicker.js</div>
<div class="ic" style="left:978px;top:391.1px"><svg width="16" height="17" viewBox="0 0 16 17"><path d="M2 5.2 L6 1 V5.2 Z" fill="#9aa7b0"/><path d="M7 1 H12 V8 H2 V6.2 H7 Z" fill="#9aa7b0"/><rect x="0" y="9" width="15" height="7" fill="#d2a149"/><path d="M3.6 10.2 V13.6 Q3.6 15 2.4 15 H1.6" fill="none" stroke="#3b3424" stroke-width="1.1"/><path d="M8.6 10.8 Q8.2 10.1 7 10.1 Q5.6 10.1 5.6 11.3 Q5.6 12.3 7 12.5 Q8.6 12.7 8.6 13.8 Q8.6 15 7 15 Q5.7 15 5.3 14.2" fill="none" stroke="#3b3424" stroke-width="1.1"/></svg></div>
<div class="tt" style="left:996px;top:389.1px">primaryColorChangeSetting.js</div>
<div class="ic" style="left:978px;top:411.05px"><svg width="16" height="17" viewBox="0 0 16 17"><path d="M2 5.2 L6 1 V5.2 Z" fill="#9aa7b0"/><path d="M7 1 H12 V8 H2 V6.2 H7 Z" fill="#9aa7b0"/><rect x="0" y="9" width="15" height="7" fill="#d2a149"/><path d="M3.6 10.2 V13.6 Q3.6 15 2.4 15 H1.6" fill="none" stroke="#3b3424" stroke-width="1.1"/><path d="M8.6 10.8 Q8.2 10.1 7 10.1 Q5.6 10.1 5.6 11.3 Q5.6 12.3 7 12.5 Q8.6 12.7 8.6 13.8 Q8.6 15 7 15 Q5.7 15 5.3 14.2" fill="none" stroke="#3b3424" stroke-width="1.1"/></svg></div>
<div class="tt" style="left:996px;top:409.05px">sidebarMenu.js</div>
<div class="ic" style="left:978px;top:431.0px"><svg width="16" height="17" viewBox="0 0 16 17"><path d="M2 5.2 L6 1 V5.2 Z" fill="#9aa7b0"/><path d="M7 1 H12 V8 H2 V6.2 H7 Z" fill="#9aa7b0"/><rect x="0" y="9" width="15" height="7" fill="#d2a149"/><path d="M3.6 10.2 V13.6 Q3.6 15 2.4 15 H1.6" fill="none" stroke="#3b3424" stroke-width="1.1"/><path d="M8.6 10.8 Q8.2 10.1 7 10.1 Q5.6 10.1 5.6 11.3 Q5.6 12.3 7 12.5 Q8.6 12.7 8.6 13.8 Q8.6 15 7 15 Q5.7 15 5.3 14.2" fill="none" stroke="#3b3424" stroke-width="1.1"/></svg></div>
<div class="tt" style="left:996px;top:429.0px">sweetalertManage.js</div>
<div class="ic" style="left:978px;top:450.95px"><svg width="16" height="17" viewBox="0 0 16 17"><path d="M2 5.2 L6 1 V5.2 Z" fill="#9aa7b0"/><path d="M7 1 H12 V8 H2 V6.2 H7 Z" fill="#9aa7b0"/><rect x="0" y="9" width="15" height="7" fill="#d2a149"/><path d="M3.6 10.2 V13.6 Q3.6 15 2.4 15 H1.6" fill="none" stroke="#3b3424" stroke-width="1.1"/><path d="M8.6 10.8 Q8.2 10.1 7 10.1 Q5.6 10.1 5.6 11.3 Q5.6 12.3 7 12.5 Q8.6 12.7 8.6 13.8 Q8.6 15 7 15 Q5.7 15 5.3 14.2" fill="none" stroke="#3b3424" stroke-width="1.1"/></svg></div>
<div class="tt blue" style="left:996px;top:448.95px">themeDirectionSetting.js</div>
<div class="ic" style="left:944px;top:473.9px"><svg width="7" height="11" viewBox="0 0 7 11"><path d="M0.5 0.3 L4.9 4.5 L0.5 8.7" fill="none" stroke="#b4b6b8" stroke-width="1.3"/></svg></div>
<div class="ic" style="left:960px;top:472.9px"><svg width="14" height="11" viewBox="0 0 14 11"><path d="M0 0 H5.5 L7 2 H14 V11 H0 Z" fill="#8a939b"/></svg></div>
<div class="tt" style="left:978px;top:468.9px">i18n</div>
<div class="ic" style="left:944px;top:493.85px"><svg width="7" height="11" viewBox="0 0 7 11"><path d="M0.5 0.3 L4.9 4.5 L0.5 8.7" fill="none" stroke="#b4b6b8" stroke-width="1.3"/></svg></div>
<div class="ic" style="left:960px;top:492.85px"><svg width="14" height="11" viewBox="0 0 14 11"><path d="M0 0 H5.5 L7 2 H14 V11 H0 Z" fill="#8a939b"/></svg></div>
<div class="tt" style="left:978px;top:488.85px">layouts</div>
<div class="ic" style="left:944px;top:513.8px"><svg width="7" height="11" viewBox="0 0 7 11"><path d="M0.5 0.3 L4.9 4.5 L0.5 8.7" fill="none" stroke="#b4b6b8" stroke-width="1.3"/></svg></div>
<div class="ic" style="left:960px;top:512.8px"><svg width="14" height="11" viewBox="0 0 14 11"><path d="M0 0 H5.5 L7 2 H14 V11 H0 Z" fill="#8a939b"/></svg></div>
<div class="tt" style="left:978px;top:508.8px">router</div>
<div class="ic" style="left:944px;top:533.75px"><svg width="7" height="11" viewBox="0 0 7 11"><path d="M0.5 0.3 L4.9 4.5 L0.5 8.7" fill="none" stroke="#b4b6b8" stroke-width="1.3"/></svg></div>
<div class="ic" style="left:960px;top:532.75px"><svg width="14" height="11" viewBox="0 0 14 11"><path d="M0 0 H5.5 L7 2 H14 V11 H0 Z" fill="#8a939b"/></svg></div>
<div class="tt" style="left:978px;top:528.75px">stores</div>
<div class="ic" style="left:944px;top:553.7px"><svg width="7" height="11" viewBox="0 0 7 11"><path d="M0.5 0.3 L4.9 4.5 L0.5 8.7" fill="none" stroke="#b4b6b8" stroke-width="1.3"/></svg></div>
<div class="ic" style="left:960px;top:552.7px"><svg width="14" height="11" viewBox="0 0 14 11"><path d="M0 0 H5.5 L7 2 H14 V11 H0 Z" fill="#8a939b"/></svg></div>
<div class="tt" style="left:978px;top:548.7px">views</div>
<div class="ic" style="left:960px;top:573.05px"><svg width="14" height="12" viewBox="0 0 14 12"><path d="M0.2 0 H3.5 L7 5.9 L10.5 0 H13.8 L7 11.3 Z" fill="#41b883"/><path d="M3.5 0 H5.5 L7 2.5 L8.5 0 H10.5 L7 5.9 Z" fill="#35495e"/></svg></div>
<div class="tt" style="left:978px;top:568.65px">App.vue</div>
<div class="ic" style="left:960px;top:590.6px"><svg width="16" height="17" viewBox="0 0 16 17"><path d="M2 5.2 L6 1 V5.2 Z" fill="#9aa7b0"/><path d="M7 1 H12 V8 H2 V6.2 H7 Z" fill="#9aa7b0"/><rect x="0" y="9" width="15" height="7" fill="#d2a149"/><path d="M3.6 10.2 V13.6 Q3.6 15 2.4 15 H1.6" fill="none" stroke="#3b3424" stroke-width="1.1"/><path d="M8.6 10.8 Q8.2 10.1 7 10.1 Q5.6 10.1 5.6 11.3 Q5.6 12.3 7 12.5 Q8.6 12.7 8.6 13.8 Q8.6 15 7 15 Q5.7 15 5.3 14.2" fill="none" stroke="#3b3424" stroke-width="1.1"/></svg></div>
<div class="tt" style="left:978px;top:588.6px">layouts.js</div>
<div class="ic" style="left:960px;top:610.55px"><svg width="16" height="17" viewBox="0 0 16 17"><path d="M2 5.2 L6 1 V5.2 Z" fill="#9aa7b0"/><path d="M7 1 H12 V8 H2 V6.2 H7 Z" fill="#9aa7b0"/><rect x="0" y="9" width="15" height="7" fill="#d2a149"/><path d="M3.6 10.2 V13.6 Q3.6 15 2.4 15 H1.6" fill="none" stroke="#3b3424" stroke-width="1.1"/><path d="M8.6 10.8 Q8.2 10.1 7 10.1 Q5.6 10.1 5.6 11.3 Q5.6 12.3 7 12.5 Q8.6 12.7 8.6 13.8 Q8.6 15 7 15 Q5.7 15 5.3 14.2" fill="none" stroke="#3b3424" stroke-width="1.1"/></svg></div>
<div class="tt" style="left:978px;top:608.55px">main.js</div>
<div id="bottomb"></div>
<div id="bottombar"></div>

<!-- bottom bar items -->
<svg class="abs" style="left:17px;top:625px" width="10" height="12" viewBox="0 0 10 12"><path d="M2.5 1 V11 M7.5 3 C7.5 6 6 7.5 2.5 8.5" fill="none" stroke="#b4b4b4" stroke-width="1.5"/><circle cx="2.5" cy="2" r="1.5" fill="#b4b4b4"/><circle cx="7.5" cy="2.5" r="1.5" fill="#b4b4b4"/></svg>
<div class="bb" style="left:32px">Git</div>
<svg class="abs" style="left:66px;top:625px" width="11" height="12" viewBox="0 0 11 12"><path d="M0 1.5 H2 M3.5 1.5 H11 M0 5 H2 M3.5 5 H11 M0 8.5 H2 M3.5 8.5 H11" stroke="#b4b4b4" stroke-width="1.5"/></svg>
<div class="bb" style="left:81px">TODO</div>
<svg class="abs" style="left:133px;top:625px" width="11" height="12" viewBox="0 0 11 12"><circle cx="5.5" cy="6" r="5.3" fill="#b4b4b4"/><rect x="4.7" y="2.5" width="1.6" height="5" fill="#3c3f41"/></svg>
<div class="bb" style="left:149px">Problems</div>
<svg class="abs" style="left:215px;top:625px" width="12" height="12" viewBox="0 0 12 12"><path d="M3 0.5 H9 L11.8 6 L9 11.5 H3 L0.2 6 Z" fill="#b4b4b4"/><path d="M4.5 3 L8.5 6 L4.5 9 Z" fill="#3c3f41"/></svg>
<div class="bb" style="left:232px">Services</div>
<svg class="abs" style="left:294px;top:625px" width="11" height="12" viewBox="0 0 11 12"><rect x="0" y="0.5" width="11" height="11" fill="#b4b4b4"/><path d="M2 2.5 L5 5 L2 7.5" fill="none" stroke="#3c3f41" stroke-width="1.3"/><rect x="5" y="8" width="4" height="1.3" fill="#3c3f41"/></svg>
<div class="bb" style="left:310px">Terminal</div>

</div></body></html>
